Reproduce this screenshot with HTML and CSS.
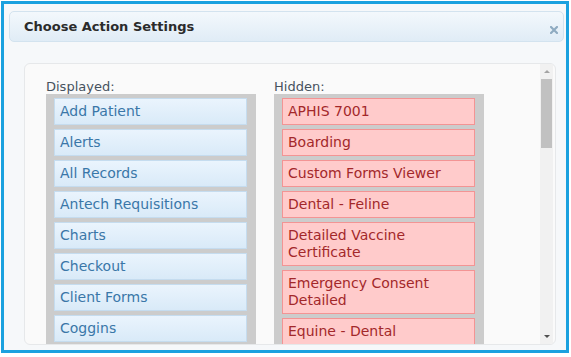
FILE: index.html
```html
<!DOCTYPE html>
<html lang="en">
<head>
    <meta charset="UTF-8">
    <title>Choose Action Settings</title>
    <link rel="stylesheet" href="styles.css">
</head>
<body>
    <div class="dialog">
        <div class="dialog-header">
            <span class="dialog-title">Choose Action Settings</span>
            <svg class="dialog-close" width="8" height="8" viewBox="0 0 8 8">
                <path d="M1 1 L7 7 M7 1 L1 7" stroke="#8fabc1" stroke-width="2.2" stroke-linecap="square"/>
            </svg>
        </div>

        <div class="panel">
            <div class="panel-content">
                <div class="column">
                    <div class="column-label">Displayed:</div>
                    <ul class="action-list">
                        <li class="action shown">Add Patient</li>
                        <li class="action shown">Alerts</li>
                        <li class="action shown">All Records</li>
                        <li class="action shown">Antech Requisitions</li>
                        <li class="action shown">Charts</li>
                        <li class="action shown">Checkout</li>
                        <li class="action shown">Client Forms</li>
                        <li class="action shown">Coggins</li>
                    </ul>
                </div>
                <div class="column">
                    <div class="column-label">Hidden:</div>
                    <ul class="action-list">
                        <li class="action hidden">APHIS 7001</li>
                        <li class="action hidden">Boarding</li>
                        <li class="action hidden">Custom Forms Viewer</li>
                        <li class="action hidden">Dental - Feline</li>
                        <li class="action hidden">Detailed Vaccine Certificate</li>
                        <li class="action hidden">Emergency Consent Detailed</li>
                        <li class="action hidden">Equine - Dental</li>
                    </ul>
                </div>
            </div>
            <div class="scrollbar">
                <div class="scroll-btn up"></div>
                <div class="scroll-track">
                    <div class="scroll-thumb"></div>
                </div>
                <div class="scroll-btn down"></div>
            </div>
        </div>
    </div>
</body>
</html>
```

FILE: styles.css
```css
body {
    margin: 0;
    background: #ffffff;
    font-family: "DejaVu Sans", Verdana, sans-serif;
}
.dialog {
    box-sizing: border-box;
    width: 568px;
    height: 352px;
    margin: 1px 0 0 1px;
    border: 3px solid #1ba1df;
    background: #f6f8fa;
    padding: 7px 2px 5px 5px;
    display: flex;
    flex-direction: column;
}
.dialog-header {
    box-sizing: border-box;
    height: 31px;
    border: 1px solid #d3e3ef;
    border-radius: 5px;
    background: linear-gradient(#f3f8fc, #e0ecf6);
    display: flex;
    align-items: center;
    justify-content: space-between;
    padding: 0 5px 0 14px;
}
.dialog-title {
    font-weight: bold;
    font-size: 13px;
    color: #2b2b2b;
}
.dialog-close {
    margin-top: 6px;
}
.panel {
    flex: 1;
    min-height: 0;
    margin: 21px 8px 0 15px;
    border: 1px solid #e6e8ea;
    border-radius: 6px;
    background: #fafafa;
    display: flex;
    overflow: hidden;
}
.panel-content {
    flex: 1;
    display: flex;
    gap: 18px;
    padding: 15px 0 0 21px;
}
.column {
    width: 210px;
    display: flex;
    flex-direction: column;
}
.column-label {
    font-size: 13px;
    color: #46525e;
    line-height: 15px;
    height: 15px;
}
.action-list {
    flex: 1;
    list-style: none;
    margin: 0;
    background: #cccccc;
    padding: 4px 9px 0 8px;
    display: flex;
    flex-direction: column;
    gap: 4px;
}
.action {
    border: 1px solid;
    padding: 4px 5px;
    font-size: 14px;
    line-height: 17px;
}
.shown {
    border-color: #c5dcef;
    background: linear-gradient(#eaf4fd, #d9eaf8);
    color: #3a77a8;
}
.hidden {
    border-color: #f39494;
    background: #ffcbcb;
    color: #a3282a;
}
.scrollbar {
    width: 13px;
    margin-right: 2px;
    background: #f1f1f1;
    display: flex;
    flex-direction: column;
}
.scroll-btn {
    height: 15px;
    display: flex;
    justify-content: center;
    align-items: center;
}
.scroll-btn::after {
    content: "";
    border-left: 3px solid transparent;
    border-right: 3px solid transparent;
}
.up::after {
    border-bottom: 3px solid #a3a3a3;
}
.down::after {
    border-top: 3px solid #505050;
}
.scroll-track {
    flex: 1;
}
.scroll-thumb {
    height: 69px;
    margin: 0 1px;
    background: #c1c1c1;
}
```
